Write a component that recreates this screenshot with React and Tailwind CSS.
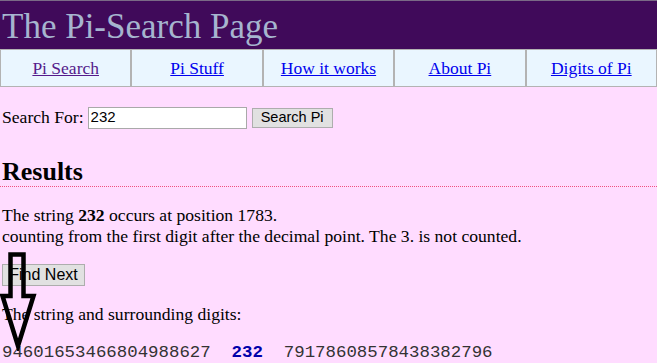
const navLinks = [
  { label: 'Pi Search', visited: true },
  { label: 'Pi Stuff' },
  { label: 'How it works' },
  { label: 'About Pi' },
  { label: 'Digits of Pi' },
];

function DownArrow() {
  return (
    <svg className="absolute left-0 top-[251px] pointer-events-none" width="40" height="100" viewBox="0 0 40 100">
      <polygon
        points="10.5,3.5 23.5,3.5 23.5,45 33.5,45 18,95 2.5,45 10.5,45"
        fill="none"
        stroke="#000"
        strokeWidth="4.5"
        strokeLinejoin="miter"
      />
    </svg>
  );
}

export default function App() {
  return (
    <div className="relative w-[657px] h-[363px] overflow-hidden bg-[#ffdcff] font-['Liberation_Serif',serif] text-black">
      <div className="h-[49px] bg-[#400a5a] border-t border-[#7a6a86] px-[2px] flex items-center">
        <h1 className="text-[35px] leading-none text-[#a6b5cf] mt-[2px]">The Pi-Search Page</h1>
      </div>
      <div className="grid grid-cols-5 h-[38px] bg-[#eaf6ff]">
        {navLinks.map((l) => (
          <div key={l.label} className="border border-[#b3b3b3] flex items-center justify-center">
            <a
              href="#"
              className={`text-[17.5px] underline ${l.visited ? 'text-[#551a8b]' : 'text-[#0000ee]'}`}
            >
              {l.label}
            </a>
          </div>
        ))}
      </div>
      <div className="px-[2px]">
        <div className="mt-[20px] flex items-center h-[21px] text-[17.6px]">
          <span>Search For:</span>
          <input
            defaultValue="232"
            className="ml-[4px] w-[159px] h-[22px] bg-white border border-[#a9a9a9] px-[2px] font-['Liberation_Sans',sans-serif] text-[15px] outline-none"
          />
          <button className="ml-[5px] w-[81px] h-[20px] bg-[#e1e1e1] border border-[#adadad] font-['Liberation_Sans',sans-serif] text-[14.5px] leading-none">
            Search Pi
          </button>
        </div>
        <h2 className="mt-[30px] text-[26px] leading-[28px] font-bold border-b border-dotted border-[#f05080] -mx-[2px] px-[2px]">
          Results
        </h2>
        <p className="mt-[18px] text-[17.6px] leading-[21px]">
          The string <b>232</b> occurs at position 1783.
          <br />
          counting from the first digit after the decimal point. The 3. is not counted.
        </p>
        <button className="mt-[17px] w-[83px] h-[22px] bg-[#e1e1e1] border border-[#adadad] font-['Liberation_Sans',sans-serif] text-[16px] leading-none">
          Find Next
        </button>
        <p className="mt-[17px] text-[17.6px] leading-[21px]">The string and surrounding digits:</p>
        <div className="mt-[18px] font-['Liberation_Mono',monospace] text-[17.4px] leading-[20px] whitespace-pre text-[#333]">
          {'94601653466804988627  '}
          <b className="text-[#0000aa]">232</b>
          {'  79178608578438382796'}
        </div>
      </div>
      <DownArrow />
    </div>
  );
}
